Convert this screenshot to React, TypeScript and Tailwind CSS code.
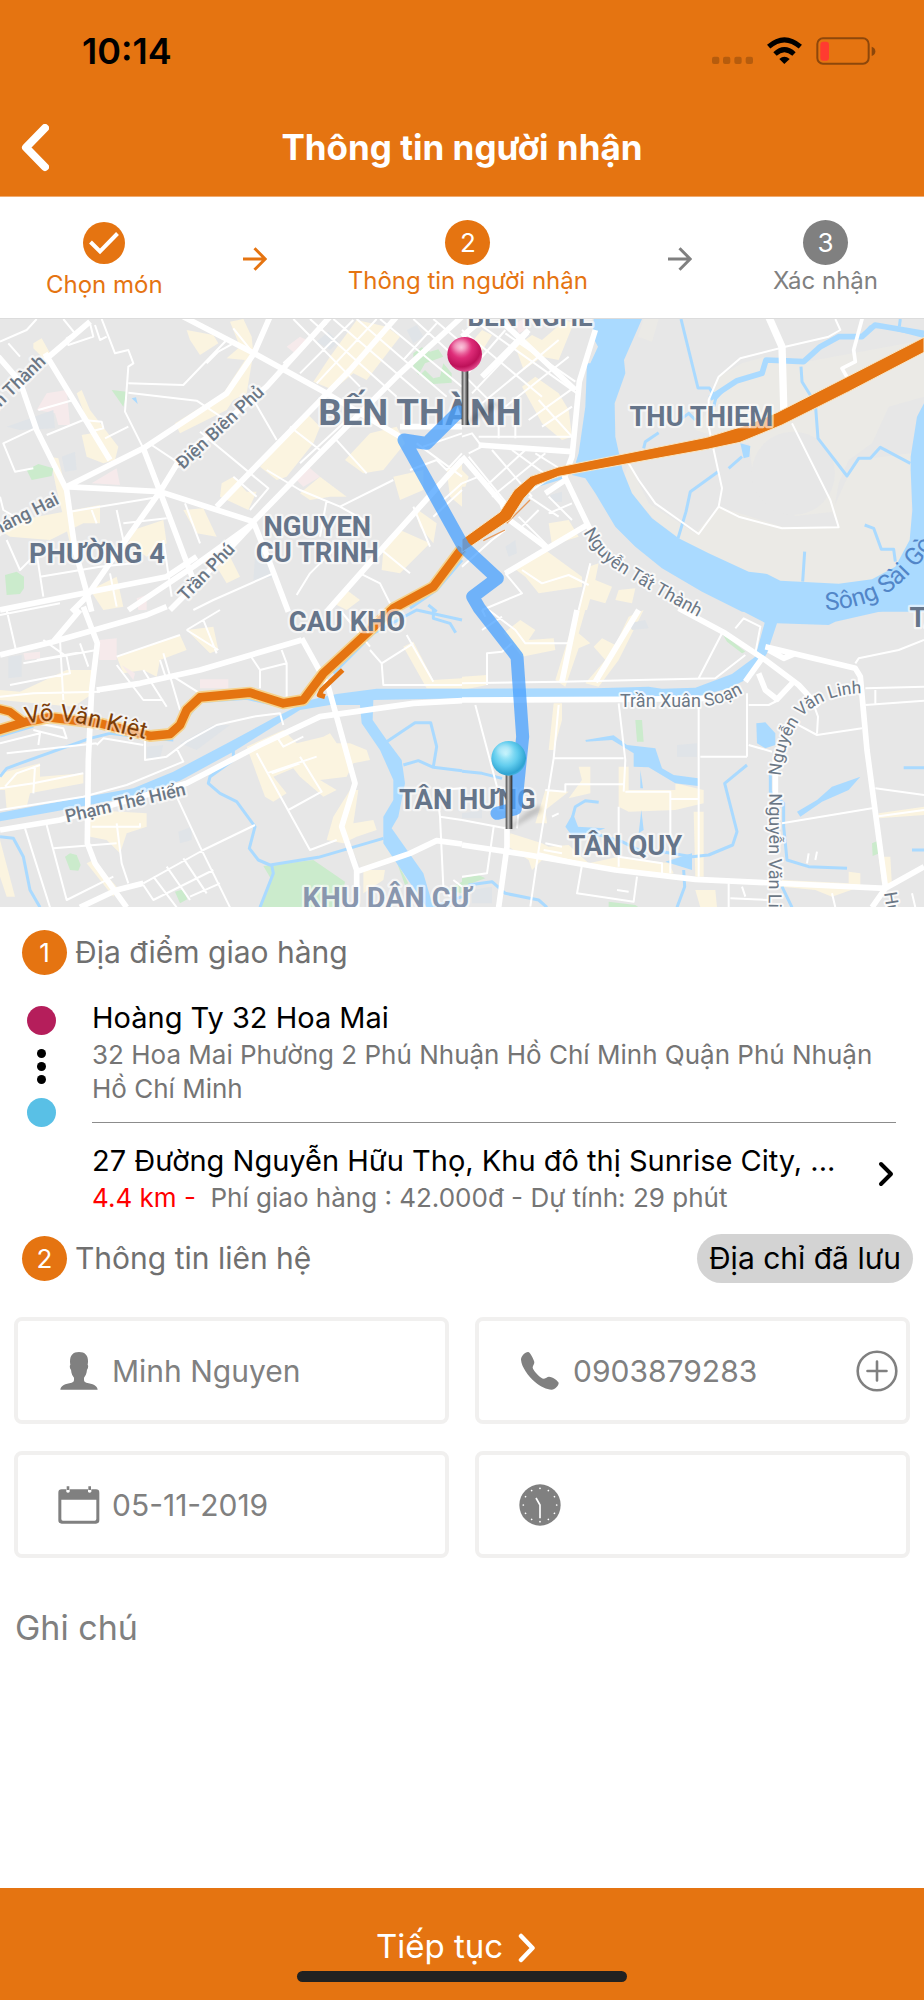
import React from 'react';

const WATER = '#aadaff';
const ORANGE = '#e57411';

type Tile = { x: number; y: number };
const A: Tile = { x: 0, y: 0 };
const B: Tile = { x: 1386, y: 0 };
const C: Tile = { x: 0, y: 900 };
const D: Tile = { x: 1386, y: 900 };

/* The map is drawn in four tiles; every layer lists one path per tile. */
function Layer({ paths, ...rest }: { paths: [string, string, string, string] } & React.SVGProps<SVGGElement>) {
  const tiles = [A, B, C, D];
  return (
    <g {...rest}>
      {paths.map((d, i) => (
        <path key={i} d={d} transform={`translate(${tiles[i].x} ${tiles[i].y})`} />
      ))}
    </g>
  );
}

const sand: [string, string, string, string] = [
  '',
  'M590 27L570 95L528 80L545 27ZM740 300L770 200L840 160L910 140L1010 160L1386 90V260L1280 290L1230 400L1160 450L1130 520L1115 605L1000 618L910 560L870 470L860 400L830 400L700 360L740 300ZM500 460L560 580L700 670L770 590L960 650L1130 650L1110 605L1180 450L1348 430V850H900L640 700L480 520Z',
  'M1050 710L1150 690L1190 755L1085 775Z',
  '',
];

const city: [string, string, string, string] = [
  'M100 100L125 85L150 130L135 150L100 115ZM230 250L245 240L270 300L355 410L345 450L310 460L260 440L245 375L275 370ZM560 60L640 75L655 100L600 135L570 90ZM690 35L730 27L755 80L760 130L740 250L700 270L680 300L540 370L525 340L670 250L735 150L680 145L720 110ZM990 140L1070 30L1160 50L1200 80L1100 210L1060 190L1000 240L940 215ZM780 470L920 310L960 350L940 400L860 500L830 510ZM1035 450L1110 370L1190 350L1215 400L1150 480L1090 490ZM665 520L700 500L740 545L770 545L745 600L660 560ZM900 550L960 500L1040 560L990 560L930 570ZM550 600L610 595L650 680L590 670ZM0 660L60 630L300 585L300 640L250 640L150 690L30 680ZM400 660L490 630L500 700L440 740L385 700ZM1150 720L1200 660L1290 700L1200 790L1145 780ZM1180 500L1270 480L1270 540L1200 570ZM1240 590L1310 640L1300 700L1260 650ZM650 770L690 740L720 800L680 820ZM270 840L350 800L370 890L310 900ZM1340 480L1386 450V590L1350 560ZM1000 880L1040 840L1080 870L1040 900ZM150 440L175 445L210 590L230 700L215 720L170 540Z',
  'M160 110L210 75L240 90L310 30L335 40L290 150L240 140L185 180ZM180 230L220 200L290 250L320 300L330 380L300 390L240 340ZM0 130L60 60L90 75L30 170ZM0 480L20 500L10 530L0 530ZM260 640L320 630L350 680L270 705ZM150 770L250 720L360 800L360 830L230 850L190 800ZM380 770L410 760L400 810L450 830L430 880L360 860ZM470 840L520 835L510 880L460 870ZM370 830L395 830L375 900L350 900Z',
  'M0 240L60 245L200 180L280 180V250L220 290L0 270ZM350 140L540 75L560 120L480 150L470 200L430 180L370 190ZM560 60L640 50L655 120L630 130ZM0 490L120 460L120 500L250 490V520L90 550L80 590L20 600L15 540L0 540ZM740 410L850 360L890 400L970 380L990 370L1010 400L1050 400L1100 420L1110 450L1060 460L1040 500L960 510L1010 540L970 560L900 500L880 475L820 500L860 550L820 575L795 560ZM1050 540L1075 540L1060 640L1120 630L1130 660L1070 680L1030 700L980 690L1000 620ZM270 600L440 610L440 650L380 670L360 730L320 690L270 680ZM0 690L45 860L20 860L0 800ZM260 760L280 750L350 830L340 860ZM1210 110L1240 95L1300 210L1386 205V235H1280ZM1090 780L1155 780L1150 810L1090 850Z',
  'M0 200L75 195V225L0 240ZM125 70L175 30L220 60L200 90L275 85L280 120L180 140ZM345 0L370 0L350 70L385 100L350 115L310 230L280 210ZM500 20L545 0L480 130L470 150L410 230L370 220L430 150L395 110L420 85L460 105ZM275 280L300 280L300 330L275 420L260 420ZM350 470H385V550L320 565L360 510ZM250 540L320 545L250 600L255 640L220 640ZM470 470H500V540H640V520L725 540V580L640 600L500 605L470 590ZM695 605H725V800H700ZM145 670L240 700L260 710L320 705L380 760L470 740L620 760L635 790L590 800L240 750L210 780L200 750L140 710ZM700 840L760 840L765 892H715ZM960 810L1160 820V785L1195 790V830L1110 860L1060 840L960 830ZM1250 610L1386 590V615L1250 625ZM1250 740L1285 740L1290 830L1260 820Z',
];

const green: [string, string, string, string] = [
  'M335 240L380 245L370 290ZM80 480L115 462L160 475L155 498L95 510ZM15 795L50 785L72 800V835L60 852L20 855ZM1240 130L1265 112L1290 125L1315 118L1330 140L1275 160L1255 195L1240 170ZM1275 180L1260 195L1300 222L1355 218V190L1330 160L1320 200L1300 205Z',
  '',
  'M195 740L210 730L230 735L242 765L235 782L210 780ZM525 845L550 838L562 868L540 880ZM790 768L940 750L1035 815L1020 892H780L815 810ZM1190 755L1225 820L1215 825ZM1340 840L1386 815V850Z',
  'M780 70L850 125L840 130L795 95ZM520 330H540L545 395H525ZM1230 700L1248 692L1252 730L1232 738ZM0 805L50 795L70 805L0 830ZM440 875L520 885L530 892H440Z',
];

const pink: [string, string, string, string] = [
  'M110 300L140 250L200 240L210 345L175 345L165 310ZM275 520L350 475L360 525ZM860 110L900 80L920 90L885 130ZM885 505L925 470L960 500L910 530ZM410 865L440 855L440 900H415Z',
  'M160 40L185 27L190 60L170 70Z',
  'M298 90L350 85V150H298ZM600 208H685V235H600ZM365 165L405 190L400 210ZM70 130L120 125V145L75 150Z',
  '',
];

const blueGrey: [string, string, string, string] = [
  'M20 350L160 300L165 355L60 360ZM950 95L985 65L1015 95L990 120ZM1220 60L1250 45L1270 80L1240 100ZM185 440L225 425L230 480L195 485ZM765 740L810 730L830 800L760 810Z',
  'M265 555L300 545L300 575L270 575ZM130 710L160 690L165 730L140 740Z',
  'M25 140L65 135V200L25 205ZM540 400L640 345L690 345L590 420ZM535 665L575 650V690L540 700ZM440 410L490 405L480 445H440Z',
  'M645 405L705 400V440H645ZM500 40L550 30L560 55L510 60ZM0 610L60 600V625H0ZM30 840L90 830V880H30Z',
];

const waterAreas: [string, string, string, string] = [
  'M395 265L408 262L413 282Z',
  'M395 27H540L486 150L490 190L458 280L460 380L482 480L510 550L570 625L650 685L740 730L860 785L915 792L955 812L1130 821L1230 808L1300 770L1343 690L1351 600L1346 480V440L1365 320L1386 280V905L840 905L720 845L600 775L520 710L460 650L400 550L370 505L330 495L350 430L370 290L375 160L385 160L408 110L392 80ZM835 400L865 408L862 440L845 445Z',
  'M0 608L160 578L400 535L520 485L690 395L820 325L930 270L1010 252L1130 236H1386V265L1120 270L1118 330L1160 390L1205 450L1215 520L1195 620L1175 655L1270 790L1300 892H1280L1180 745L1150 700V620L1180 570L1180 510L1140 420L1085 340L1080 285L990 285L900 300L700 425L540 512L400 560L160 605L0 634Z',
  'M0 236L400 235L560 230L600 236L700 233L810 192L880 140L908 38L835 0H1275L1120 35L1100 45L945 40L915 130L870 200L800 235L700 262L0 266ZM370 390L455 376L495 405L580 415L600 475L635 495L708 505V528L640 520L560 472L515 470L515 430L450 390L372 395ZM883 340L910 337L940 370V405L910 415L885 400ZM1005 605L1065 570L1110 530L1195 500L1160 540L1080 575L1015 620ZM330 615L345 650L430 655L410 662L330 678L310 650ZM610 755L690 730V780ZM535 480L543 535L535 535ZM538 600L545 660L530 670Z',
];

const streams: [string, string, string, string] = [
  'M1386 750L1310 840L1230 895M1285 885L1310 905',
  'M657 27L708 234H742L762 265L785 240L825 212L900 190L912 150L960 148L1025 155L1075 110L1130 80H1200L1225 50H1270L1386 80M1017 170L1020 215L1060 280L1068 385L1155 498L1190 445L1225 445L1255 412L1345 460M762 262L755 290M545 415L550 395L590 368M768 485L685 545L672 605L648 685M840 440L800 475M1028 725L1022 815M1208 645L1235 655L1258 718H1295L1300 755M660 325L680 310L700 330M0 710L120 640L165 580L215 530L310 500M1315 27L1312 50',
  'M0 500L20 475L60 460L270 385L330 370L450 385L520 390M0 378L100 348M540 350L600 275L740 265L850 290L920 280M700 420V450L630 500L625 520L660 550L710 575L765 650L748 715L775 750L810 765L955 742L1150 685M815 765L820 790L780 892M0 680L40 685L70 740L90 840L120 892M1210 465L1255 452L1300 472L1386 482M1300 470L1310 410L1292 338H1245L1160 395M1300 0V25L1350 40L1367 68M1300 892L1386 860M1386 30L1250 0L1120 70L1000 190',
  'M0 484L60 490L120 505M410 577L370 572L340 590L332 620L345 655L480 695L540 725M855 465L788 520L825 665L812 705L740 735L690 740L600 725M665 780L668 830L645 892M20 825L90 815L130 850L230 870L255 892M925 480V545L965 580V650L975 750L1040 770L1155 775M960 830L990 892M1325 473H1386M1350 720H1386',
];

const minorRoads: [string, string, string, string] = [
  'M0 95L80 60L110 27M25 100L60 140M190 27L225 70L200 85L205 105L280 80L270 40M305 27L345 130L385 120L400 160L385 170L375 305L430 415M285 45L300 90L320 80M385 220L550 225L680 90M385 248L590 272L700 345M115 300L220 270M140 375L250 330L305 335L310 355L270 365M105 355L10 400L45 485L100 475M315 385L385 350M455 405L530 455M620 160L655 125L700 100M600 365L805 535L750 600M755 260L830 390M0 645L60 615M210 605L480 560M350 600L370 690M275 600L290 640M20 690L60 780L110 730L130 860M370 640L500 625M490 690L515 860M120 800L300 770L400 760M330 790L350 890M555 580L600 700M800 480L900 540L1020 590L1180 510M980 570L960 680M1020 590L1110 640M1240 590L1290 710M1145 720L1230 790M1080 790L1140 820L1180 900M820 790L640 870L580 900M890 855L930 790L1020 700M1270 410L1386 370M1250 400L1386 500M700 55L760 130M880 27L1080 230M930 27L1190 260M1000 27L1260 250M1070 27L1340 260M1140 27L1386 230M850 160L980 40M900 190L1060 30M950 220L1130 27M1210 150L1310 40M1240 27L1386 160M1300 27L1386 100M1040 330L900 460M870 350L960 420M1000 380L1100 490M700 500L770 560M0 560L10 600L80 640M1230 480L1310 450L1340 480L1386 430M1330 570L1386 520M1300 620L1386 540',
  'M30 27L345 250M0 60L240 260M130 70L340 215M0 210L130 60M30 250L200 70M60 280L290 90M130 290L320 140M200 330L340 230M50 380L330 380M110 385V340M160 385V330M0 190L100 290L90 330M230 270L330 380M240 350L330 290M0 380L30 370L60 410L20 430M20 440L150 600M90 420L210 560M150 420L260 500M220 430L300 480M70 530L190 420M90 560L250 430M120 600L330 460M0 520L50 500M260 560L330 630M200 560L290 620M170 620L260 710M260 610L330 580M180 650L230 600M0 770L90 690L130 660M130 790L180 850L60 900M180 780L240 820L320 795L380 825M385 760L350 900M1120 27L1135 60L1100 80L970 110L835 145L770 200L740 270V350L780 535L770 590L710 672L580 580L530 510L500 460M770 590L830 620L960 655L1130 652L1105 570L990 340M1200 30L1175 120L1180 155L1140 175L1160 210',
  'M0 15L180 -20M20 0L50 130M30 225L210 190L200 140L130 90M110 150L250 125M180 90L190 270M70 160L290 120M350 140L540 75M480 150L500 210M560 60L655 120M610 30L650 130M660 0L560 60M240 100L265 170M350 165L430 270L490 270M430 180L500 290M490 130L540 300M520 200L600 250M750 135L780 180V235M780 180L860 160L845 120M860 160V260M0 260L100 250L300 245M0 400L120 370L115 405M100 360L200 385L190 355L110 340M20 430L290 400M290 405L310 385L430 405M435 370V450L500 440L560 395L650 345L760 320L840 310L850 345M0 535L100 520L250 490M105 470L100 550M15 530L50 490L120 465M0 600L250 560L380 525L550 455L530 415M75 655L150 892M140 645L200 870L340 800M160 715L350 700M275 650H420L420 640M350 640L365 760L385 820M530 560L600 710L690 892M430 820L610 720L765 645M460 800L530 892M500 770L570 870M550 745L620 850M430 825L460 870L580 810L640 780M570 860L660 820M770 430L930 720L1010 690M800 490L950 440M815 490L900 460M900 440L965 545L865 600M830 380L850 410L910 380M1110 120L1145 160L1240 100M1145 160L1150 225H1386M1220 75L1300 215M1020 0L1110 110M1310 540L1320 620L1330 830L1350 860M1320 620L1386 630M1310 540L1386 535M1360 810L1386 830',
  'M80 0L160 60L190 100H320M120 20L60 60M0 220L300 215L760 205L850 135M75 225V130L120 125L150 100M60 0L70 20M40 285L105 530M290 285L275 445L230 720L205 890M275 445H485M470 280L490 450L485 545M250 540L310 545V523H485M490 545H625V790M625 567H710M710 290V800M470 590V770M0 630L130 655M95 650L75 790L0 800M170 600L165 655M250 700L300 710M245 720L300 730M470 740L600 760V790M360 765L345 850L515 875L525 800M230 730L360 760M800 820V892M840 830L850 860M805 865L920 870M855 440H715M855 250V440M860 405L930 425M860 285H920L950 270M1000 340L1065 375L1200 355M1050 270L1068 320L1065 370M820 55L845 25L895 50L880 130M780 70L710 205M1180 160L1190 145L1310 120L1386 90M1210 235L1386 230M1240 240V280M1210 285L1386 272M960 640L1230 595M1240 535L1386 555M1240 620L1386 600M1110 850L1120 892M1350 850L1360 892M1040 730L1035 760M1065 725L1060 750M465 840L500 845M270 620L290 610',
];

const majorRoads: [string, string, string, string] = [
  'M-5 140L60 215L110 360L200 540L225 720L265 865L275 905M135 130L330 450M135 150L270 35M190 535L430 415L680 250L762 130L810 20M550 20L762 130L980 250L1200 380M195 530L480 545L760 635L810 760L865 905M430 415L480 545L580 810M480 545L535 455L800 230L990 20M480 545L370 700L260 860L215 905M650 590L1050 180L1190 20M755 640L960 430L1200 190L1386 20M385 900L580 770L760 640M0 900L250 850L500 800L590 740M510 900L620 790L760 640M980 905L1170 690L1386 450M1200 350L1386 350',
  'M400 60L352 215L330 440L308 500L375 640L385 660M50 405L330 425M60 200L200 60M0 440L120 580L135 625L250 710M130 790L375 645M250 550L310 510M0 80L70 20M115 30L340 240',
  'M250 -10L292 100L275 240L265 450L262 700L285 760L380 892M0 135L160 95L440 15L500 -10M290 240L420 220L600 180L905 90M905 85L985 230L1065 520L1025 650L1070 780V892M0 660L180 630L560 520L780 405L960 320L1030 310L1240 280L1386 272M1070 785L1230 730L1310 692L1386 702M240 892L350 840L430 820M160 95L240 0',
  'M0 270L480 268L740 265M650 -5L790 70L910 150L1010 225L1070 290M910 110L1180 175L1195 200L1215 420L1270 830M900 145L850 215M890 190L910 240L945 268L990 220M920 120L965 145L1000 130M0 705L200 735L460 780L700 808L1270 835L1386 770M135 650V710L110 892M1270 835L1230 892M940 450V560M345 0L300 215M530 0L400 215',
];

function MapLabel({ x, y, size, children, turn = 0, color = '#66758a', weight = 700 }: { x: number; y: number; size: number; children: React.ReactNode; turn?: number; color?: string; weight?: number }) {
  return (
    <text
      x={x}
      y={y}
      transform={turn ? `rotate(${turn} ${x} ${y})` : undefined}
      textAnchor="middle"
      fontSize={size}
      fontWeight={weight}
      fill={color}
      stroke="#ffffff"
      strokeOpacity={0.6}
      strokeWidth={14}
      strokeLinejoin="round"
      paintOrder="stroke"
    >
      {children}
    </text>
  );
}

function CurvedLabel({ id, d, size, children, color = '#6b7785', halo = 0.75 }: { id: string; d: string; size: number; children: string; color?: string; halo?: number }) {
  return (
    <>
      <path id={id} d={d} fill="none" />
      <text fontSize={size} fill={color} stroke="#ffffff" strokeOpacity={halo} strokeWidth={12} strokeLinejoin="round" paintOrder="stroke">
        <textPath href={`#${id}`}>{children}</textPath>
      </text>
    </>
  );
}

function Pin({ x, y, fill }: { x: number; y: number; fill: string }) {
  return (
    <g>
      <path d={`M${x + 2} ${y + 208}L${x + 60} ${y + 155}Q${x + 110} ${y + 130} ${x + 95} ${y + 162}L${x + 6} ${y + 212}Z`} fill="#000" opacity={0.16} filter="url(#soft)" />
      <rect x={x - 9} y={y + 48} width={20} height={164} fill="url(#needle)" />
      <circle cx={x} cy={y} r={52} fill={fill} />
      <ellipse cx={x - 14} cy={y - 26} rx={24} ry={17} fill="#fff" opacity={0.35} filter="url(#soft)" />
    </g>
  );
}

function RouteMap() {
  const expressway = 'M-10 1262L80 1235L150 1222L300 1240L450 1278L510 1272L540 1245L560 1200L600 1162L750 1148L850 1180L910 1170L970 1090L1100 970L1180 895L1300 830L1386 715';
  return (
    <svg viewBox="0 0 2772 1764" preserveAspectRatio="xMidYMid slice" className="block h-[588px] w-full shrink-0" role="img" aria-label="Bản đồ" fontFamily="Roboto, sans-serif">
      <defs>
        <filter id="soft" x="-50%" y="-50%" width="200%" height="200%">
          <feGaussianBlur stdDeviation="6" />
        </filter>
        <linearGradient id="needle">
          <stop offset="0" stopColor="#444" />
          <stop offset="0.4" stopColor="#c4c4c4" />
          <stop offset="0.65" stopColor="#777" />
          <stop offset="1" stopColor="#222" />
        </linearGradient>
        <radialGradient id="pinPink" cx="0.4" cy="0.3" r="0.7">
          <stop offset="0" stopColor="#f9a5c8" />
          <stop offset="0.45" stopColor="#de2c78" />
          <stop offset="0.8" stopColor="#bd1159" />
          <stop offset="1" stopColor="#e0478a" />
        </radialGradient>
        <radialGradient id="pinBlue" cx="0.42" cy="0.38" r="0.68">
          <stop offset="0" stopColor="#b4f0fc" />
          <stop offset="0.5" stopColor="#62cdee" />
          <stop offset="0.85" stopColor="#2ea3d2" />
          <stop offset="1" stopColor="#57bfe6" />
        </radialGradient>
      </defs>
      <rect width="2772" height="1764" fill="#e7e7e7" />
      <g transform="translate(0 -27)">
        <Layer paths={sand} fill="#ebeae6" />
        <ellipse cx="2380" cy="490" rx="125" ry="125" fill="#e7e7e7" />
        <Layer paths={city} fill="#fbf4e0" />
        <Layer paths={pink} fill="#f6eaeb" />
        <Layer paths={blueGrey} fill="#e0e4e8" />
        <Layer paths={green} fill="#cbebcc" />
        <Layer paths={waterAreas} fill={WATER} />
        <Layer paths={streams} fill="none" stroke={WATER} strokeWidth={9} strokeLinejoin="round" />
        <path d="M2130 265L2211 212L2286 190L2298 150L2411 155L2461 110L2516 80H2586L2625 45L2772 70" fill="none" stroke={WATER} strokeWidth={17} strokeLinejoin="round" />
        <Layer paths={minorRoads} fill="none" stroke="#fff" strokeWidth={6} strokeLinejoin="round" />
        <Layer paths={majorRoads} fill="none" stroke="#fff" strokeWidth={17} strokeLinejoin="round" />
        <path d="M2306 20L2346 110L2352 320" fill="none" stroke="#fff" strokeWidth={22} strokeLinejoin="round" />
        <path d="M2588 20L2561 120L2566 155L2526 175L2546 210" fill="none" stroke="#fff" strokeWidth={11} strokeLinejoin="round" />

        <g fill="none" strokeLinejoin="round">
          <path d={expressway} stroke="#f6d28c" strokeWidth={36} />
          <path d="M-10 1195L30 1205L75 1240" stroke="#f6d28c" strokeWidth={32} />
          <path d={expressway} stroke={ORANGE} strokeWidth={26} />
          <path d="M-10 1195L30 1205L75 1240" stroke={ORANGE} strokeWidth={23} />
          <path d="M1028 1080L965 1140L958 1155L975 1160" stroke={ORANGE} strokeWidth={15} />
          <path d="M1450 692L1515 660M1520 640L1590 570" stroke="#e79a5b" strokeWidth={4} />
        </g>
        <path d="M1386 688L1500 606L1543 540L1592 499L1676 471L1976 411L2120 382L2240 345L2330 308L2546 198L2772 82V127L2546 245L2346 345L2220 397L2126 417L1976 444L1676 499L1606 527L1572 565L1532 628L1386 727Z" fill={ORANGE} stroke="#fae6c2" strokeWidth={3} />

        <MapLabel x={1590} y={49} size={78}>BẾN NGHÉ</MapLabel>
        <MapLabel x={1260} y={345} size={110}>BẾN THÀNH</MapLabel>
        <MapLabel x={2104} y={348} size={82}>THU THIEM</MapLabel>
        <MapLabel x={291} y={760} size={82}>PHƯỜNG 4</MapLabel>
        <MapLabel x={952} y={677} size={82}>
          NGUYEN
          <tspan x={952} dy={79}>CU TRINH</tspan>
        </MapLabel>
        <MapLabel x={1041} y={964} size={82}>CAU KHO</MapLabel>
        <MapLabel x={1402} y={1498} size={82}>TÂN HƯNG</MapLabel>
        <MapLabel x={1876} y={1635} size={82}>TÂN QUY</MapLabel>
        <MapLabel x={1160} y={1795} size={86} color="#8896ae">KHU DÂN CƯ</MapLabel>
        <MapLabel x={2808} y={950} size={82}>TÂN</MapLabel>

        <MapLabel x={60} y={235} size={54} turn={-44} color="#6b7785" weight={500}>ên Thành</MapLabel>
        <MapLabel x={672} y={365} size={54} turn={-43} color="#6b7785" weight={500}>Điện Biên Phủ</MapLabel>
        <MapLabel x={85} y={628} size={54} turn={-27} color="#6b7785" weight={500}>háng Hai</MapLabel>
        <MapLabel x={632} y={798} size={54} turn={-46} color="#6b7785" weight={500}>Trần Phú</MapLabel>
        <MapLabel x={380} y={1496} size={54} turn={-13} color="#6b7785" weight={500}>Phạm Thế Hiển</MapLabel>
        <CurvedLabel id="vvk" d="M78 1242Q170 1220 270 1248Q380 1272 480 1298" size={71} color="#7c3d06" halo={0.5}>Võ Văn Kiệt</CurvedLabel>
        <CurvedLabel id="ntt" d="M1750 667Q1790 740 1850 780Q1970 855 2110 930" size={54}>Nguyễn Tất Thành</CurvedLabel>
        <CurvedLabel id="txs" d="M1860 1190H2110Q2180 1182 2250 1135" size={54}>Trần Xuân Soạn</CurvedLabel>
        <CurvedLabel id="nvl" d="M2342 1398Q2352 1290 2410 1215Q2480 1150 2590 1150" size={52}>Nguyễn Văn Linh</CurvedLabel>
        <CurvedLabel id="nvs" d="M2308 1450L2306 1850" size={54}>Nguyễn Văn Linh</CurvedLabel>
        <CurvedLabel id="hth" d="M2652 1748L2676 1900" size={54}>Huỳnh</CurvedLabel>
        <CurvedLabel id="ssg" d="M2476 900Q2620 895 2700 820Q2760 765 2810 690" size={74} color="#5286c8" halo={0}>Sông Sài Gòn</CurvedLabel>

        <path
          d="M1376 305L1280 400L1212 390L1290 530L1390 710L1492 805L1418 860L1438 895L1551 1040L1568 1280L1546 1496L1491 1510"
          fill="none"
          stroke="#4aa2ff"
          strokeOpacity={0.76}
          strokeWidth={39}
          strokeLinecap="round"
          strokeLinejoin="round"
        />
        <Pin x={1394} y={133} fill="url(#pinPink)" />
        <Pin x={1526} y={1345} fill="url(#pinBlue)" />
      </g>
    </svg>
  );
}

function Arrow() {
  return (
    <svg viewBox="0 0 24 24" className="size-6 shrink-0" fill="none" stroke="currentColor" strokeWidth="3" aria-hidden="true">
      <path d="M0 12H22M11.500 1.200L22.200 12L11.500 22.800" />
    </svg>
  );
}

function Step({ label, children, muted = false }: { label: string; children: React.ReactNode; muted?: boolean }) {
  return (
    <li className={muted ? 'flex flex-col items-center text-[#808080]' : 'flex flex-col items-center text-[#e57411]'}>
      {children}
      <span className="text-2xl leading-8 whitespace-nowrap">{label}</span>
    </li>
  );
}

function SectionTitle({ number, children }: { number: number; children: string }) {
  return (
    <h2 className="flex items-center gap-2 text-[30px] leading-[45px] text-[#707070]">
      <span className="flex size-[45px] items-center justify-center rounded-full bg-[#e57411] text-[26px] text-white">{number}</span>
      {children}
    </h2>
  );
}

function Field({ label, value, icon, children }: { label: string; value: string; icon: React.ReactNode; children?: React.ReactNode }) {
  return (
    <div className="flex h-[107px] items-center rounded-lg border-4 border-[#f1f0ef] pr-2 pl-10">
      <svg viewBox="0 0 126 126" className="mr-3 size-[42px] shrink-0" fill="#808080" aria-hidden="true">
        {icon}
      </svg>
      <input aria-label={label} defaultValue={value} className="h-full min-w-0 flex-1 bg-transparent text-[30px] text-[#808080] outline-none" />
      {children}
    </div>
  );
}

const personIcon = (
  <path d="M63 6C45 6 36 16 36 34C36 39 37 43 37 45C34 46 36 57 39 59C40 71 44 78 48 83V91Q48 97 41 98C22 101 8 106 7 119H119C118 106 104 101 85 98Q78 97 78 91V83C82 78 86 71 87 59C90 57 92 46 89 45C89 43 90 39 90 34C90 16 81 6 63 6Z" />
);

const phoneIcon = (
  <path d="M27 6C18 7 6 18 6 29C8 52 28 78 48 96C65 110 83 119 98 119C108 119 119 107 119 99C119 94 101 80 90 80C84 80 81 85 75 86C66 87 44 64 41 53C41 47 46 44 46 37C46 31 33 5 27 6Z" />
);

const calendarIcon = (
  <>
    <path d="M25 16H11Q1 16 1 26V109Q1 119 11 119H114Q124 119 124 109V26Q124 16 114 16H100V24Q95 28 90 24V16H35V24Q30 28 25 24ZM10 47H115V105Q115 110 110 110H15Q10 110 10 105Z" fillRule="evenodd" />
    <path d="M26 7H34V18H26ZM91 7H99V18H91Z" />
  </>
);

const clockIcon = (
  <>
    <circle cx="63" cy="63" r="62" />
    {[0, 30, 60, 90, 120, 150, 180, 210, 240, 270, 300, 330].map((a) => (
      <circle key={a} cx="63" cy="13" r="2.6" fill="#fff" transform={`rotate(${a} 63 63)`} />
    ))}
    <path d="M51 42L63 63V103" fill="none" stroke="#fff" strokeWidth="5" />
  </>
);

export default function App() {
  return (
    <div className="flex min-h-screen flex-col bg-white font-[Inter,'Noto_Sans',sans-serif] text-black">
      <header className="border-b border-[#f0ab70] bg-[#e57411]">
        <div className="flex h-[101px] items-center justify-between pr-12 pl-[82px]">
          <time className="text-[36px] font-semibold">10:14</time>
          <svg viewBox="0 0 492 84" className="h-7 w-[164px]" aria-hidden="true">
            <g fill="#000" opacity="0.2">
              <rect y="59" width="22" height="22" rx="6" />
              <rect x="33" y="59" width="22" height="22" rx="6" />
              <rect x="67" y="59" width="22" height="22" rx="6" />
              <rect x="101" y="59" width="22" height="22" rx="6" />
            </g>
            <g fill="none" stroke="#000" strokeWidth="15">
              <path d="M170 29Q217 -12 265 29" />
              <path d="M189 51Q217 25 246 51" />
            </g>
            <path d="M202 66Q217 52 233 66L217 81Z" />
            <rect x="316" y="4" width="154" height="76" rx="17" fill="none" stroke="#8d470b" strokeWidth="6" />
            <rect x="325" y="14" width="26" height="57" rx="9" fill="#ff3b30" />
            <path d="M479 29Q490 32 490 43T479 57Z" fill="#8d470b" />
          </svg>
        </div>
        <div className="grid h-[95px] grid-cols-[80px_1fr_80px] items-center pb-0.5 text-white">
          <button type="button" aria-label="Quay lại" className="flex h-full items-center pl-[21px]">
            <svg viewBox="0 0 28 48" className="h-12 w-7" fill="none" stroke="currentColor" strokeWidth="8" strokeLinecap="round" strokeLinejoin="round" aria-hidden="true">
              <path d="M24 4L5 23.500L24 43" />
            </svg>
          </button>
          <h1 className="text-center text-[35px] font-bold whitespace-nowrap">Thông tin người nhận</h1>
        </div>
      </header>

      <ol className="flex h-[122px] items-center justify-between border-b border-[#dcdcdc] px-[46px] pt-0.5">
        <Step label="Chọn món">
          <svg viewBox="0 0 52 52" className="size-[52px]" aria-hidden="true">
            <circle cx="26" cy="26" r="21" fill={ORANGE} />
            <path d="M12.500 25L22 34.500L39.500 16.500" fill="none" stroke="#fff" strokeWidth="4" />
          </svg>
        </Step>
        <li aria-hidden="true" className="text-[#e57411]"><Arrow /></li>
        <Step label="Thông tin người nhận">
          <span className="flex size-[45px] items-center justify-center rounded-full bg-[#e57411] text-[26px] text-white">2</span>
        </Step>
        <li aria-hidden="true" className="text-[#808080]"><Arrow /></li>
        <Step label="Xác nhận" muted>
          <span className="flex size-[45px] items-center justify-center rounded-full bg-[#808080] text-[26px] text-white">3</span>
        </Step>
      </ol>

      <RouteMap />

      <main className="flex flex-1 flex-col">
        <section className="pt-[23px] pl-[22px]">
          <SectionTitle number={1}>Địa điểm giao hàng</SectionTitle>
          <div className="flex gap-9 pt-[23px] pr-7 pl-[5px]">
            <div className="flex w-[29px] shrink-0 flex-col items-center pt-2">
              <span className="size-[29px] rounded-full bg-[#b51e5b]" />
              <span className="my-[14px] flex flex-col gap-1">
                <span className="size-[9px] rounded-full bg-black" />
                <span className="size-[9px] rounded-full bg-black" />
                <span className="size-[9px] rounded-full bg-black" />
              </span>
              <span className="size-[29px] rounded-full bg-[#59c0e6]" />
            </div>
            <div className="min-w-0 flex-1">
              <div className="border-b border-[#8c8c8c] pb-4">
                <p className="text-[29px] leading-10">Hoàng Ty 32 Hoa Mai</p>
                <p className="text-[26px] leading-[34px] text-[#757575]">32 Hoa Mai Phường 2 Phú Nhuận Hồ Chí Minh Quận Phú Nhuận Hồ Chí Minh</p>
              </div>
              <button type="button" className="flex w-full items-center justify-between gap-3 pt-[18px] text-left">
                <span className="min-w-0 flex-1">
                  <span className="block truncate text-[29px] leading-10">27 Đường Nguyễn Hữu Thọ, Khu đô thị Sunrise City, ...</span>
                  <span className="block text-[26px] leading-[34px] whitespace-pre text-[#757575]"><span className="text-[#ff0000]">4.4 km - </span> Phí giao hàng : 42.000đ - Dự tính: 29 phút</span>
                </span>
                <svg viewBox="0 0 20 28" className="mb-2 h-7 w-5 shrink-0" fill="none" stroke="currentColor" strokeWidth="4" strokeLinecap="round" strokeLinejoin="round" aria-hidden="true">
                  <path d="M5 4L15 14L5 24" />
                </svg>
              </button>
            </div>
          </div>
        </section>

        <section className="pt-[19px]">
          <div className="flex items-center justify-between pr-[11px] pl-[22px]">
            <SectionTitle number={2}>Thông tin liên hệ</SectionTitle>
            <button type="button" className="h-[49px] rounded-full bg-[#d3d3d3] px-3 text-[30px] leading-[49px] whitespace-nowrap">Địa chỉ đã lưu</button>
          </div>
          <div className="grid grid-cols-2 gap-x-[26px] gap-y-[27px] px-[14px] pt-[34px]">
            <Field label="Họ tên" value="Minh Nguyen" icon={personIcon} />
            <Field label="Số điện thoại" value="0903879283" icon={phoneIcon}>
              <button type="button" aria-label="Thêm số điện thoại" className="shrink-0">
                <svg viewBox="0 0 42 42" className="size-[42px]" fill="none" stroke="#808080" strokeWidth="2.600" strokeLinecap="round" aria-hidden="true">
                  <circle cx="21" cy="21" r="19.300" />
                  <path d="M11.500 21H30.500M21 11.500V30.500" />
                </svg>
              </button>
            </Field>
            <Field label="Ngày giao" value="05-11-2019" icon={calendarIcon} />
            <Field label="Giờ giao" value="" icon={clockIcon} />
          </div>
        </section>
        <textarea aria-label="Ghi chú" placeholder="Ghi chú" className="mt-12 min-h-40 flex-1 resize-none px-[15px] text-[34px] leading-[44px] outline-none placeholder:text-[#808080]" />
      </main>

      <footer className="flex h-28 flex-col items-center bg-[#e57411] pt-9 text-white">
        <button type="button" className="flex h-[47px] items-center gap-[15px] pr-3 pb-1 text-[33px] leading-10">
          Tiếp tục
          <svg viewBox="0 0 18 30" className="mt-1 h-[30px] w-[18px]" fill="none" stroke="currentColor" strokeWidth="4.500" strokeLinecap="round" strokeLinejoin="round" aria-hidden="true">
            <path d="M3 3L14.500 15L3 27" />
          </svg>
        </button>
        <div className="h-[11px] w-[330px] shrink-0 rounded-full bg-[#212121]" />
      </footer>
    </div>
  );
}
